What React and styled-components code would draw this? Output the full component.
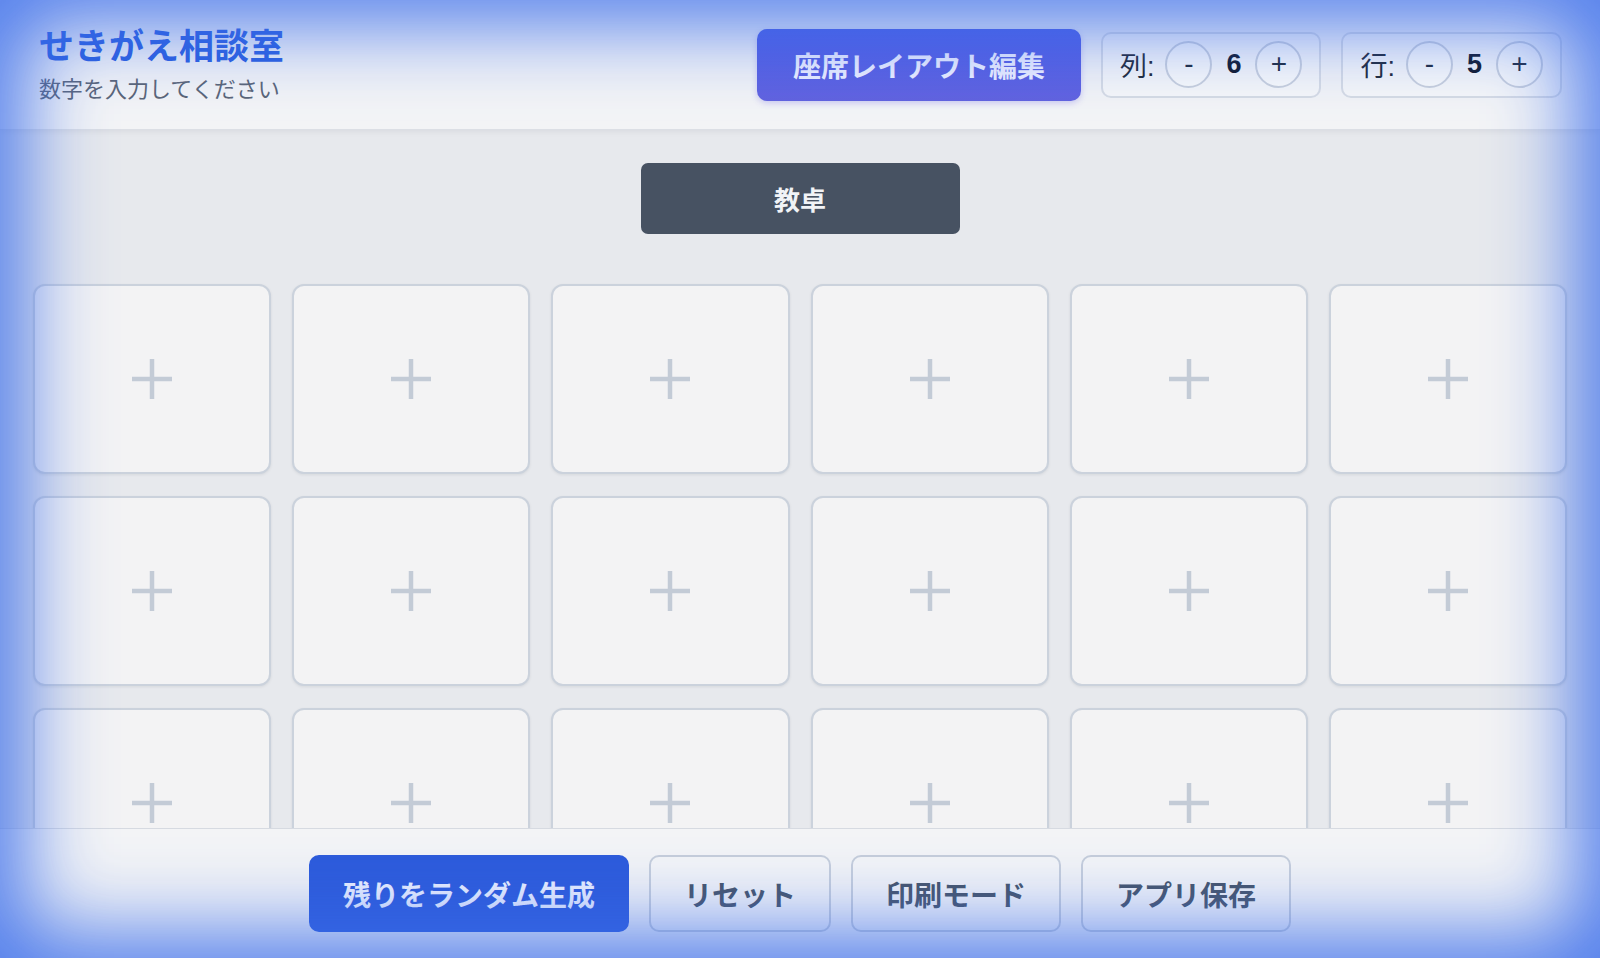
import React, { useState } from "react";
import styled, { createGlobalStyle } from "styled-components";

const Global = createGlobalStyle`
  * { box-sizing: border-box; }
  html, body { margin: 0; padding: 0; height: 100%; }
  body {
    font-family: "Liberation Sans", "Noto Sans CJK JP", sans-serif;
    background: #e7e9ed;
    overflow: hidden;
  }
  #root { height: 100%; }
`;

const Shell = styled.div`
  height: 100vh;
  display: flex;
  flex-direction: column;
  background: #e7e9ed;
`;

const Header = styled.header`
  height: 130px;
  flex-shrink: 0;
  display: flex;
  align-items: center;
  justify-content: space-between;
  padding: 0 38px 0 39px;
  background: #f3f4f6;
  border-bottom: 1px solid #dcdfe5;
  box-shadow: 0 2px 6px rgba(15, 23, 42, 0.06);
  position: relative;
  z-index: 1;
`;

const TitleBlock = styled.div`
  display: flex;
  flex-direction: column;
  gap: 8px;
`;

const Title = styled.h1`
  margin: 0;
  font-size: 35px;
  line-height: 42px;
  font-weight: 700;
  color: #2b5fdf;
`;

const Subtitle = styled.p`
  margin: 0;
  font-size: 22px;
  line-height: 28px;
  color: #5b6576;
`;

const HeaderRight = styled.div`
  display: flex;
  align-items: center;
  gap: 20px;
`;

const EditButton = styled.button`
  height: 72px;
  padding: 0 36px;
  border: none;
  border-radius: 10px;
  background: linear-gradient(180deg, #4c5de5 0%, #6263df 100%);
  color: #eef0ff;
  font-family: inherit;
  font-size: 28px;
  font-weight: 700;
  cursor: pointer;
  box-shadow: 0 2px 6px rgba(79, 70, 229, 0.25);
`;

const Stepper = styled.div`
  height: 66px;
  display: flex;
  align-items: center;
  padding: 0 17px;
  border: 2px solid #d6dbe4;
  border-radius: 10px;
  background: rgba(255, 255, 255, 0.25);
`;

const StepLabel = styled.span`
  font-size: 27px;
  color: #1f2937;
  margin-right: 11px;
`;

const Circle = styled.button`
  width: 47px;
  height: 47px;
  border-radius: 50%;
  border: 2px solid #c9d0dc;
  background: rgba(255, 255, 255, 0.35);
  color: #1e293b;
  font-family: "Liberation Sans", sans-serif;
  font-size: 28px;
  font-weight: 500;
  line-height: 1;
  display: flex;
  align-items: center;
  justify-content: center;
  padding: 0 0 2px;
  cursor: pointer;
`;

const StepValue = styled.span`
  min-width: 43px;
  text-align: center;
  font-size: 27px;
  font-weight: 700;
  color: #0f172a;
`;

const Main = styled.main`
  flex: 1;
  overflow-y: auto;
  scrollbar-width: none;
  &::-webkit-scrollbar { display: none; }
  padding: 33px 33px 40px 33px;
`;

const Desk = styled.div`
  width: 319px;
  height: 71px;
  margin: 0 auto 50px;
  border-radius: 7px;
  background: #475262;
  color: #f1f3f6;
  font-size: 26px;
  font-weight: 700;
  display: flex;
  align-items: center;
  justify-content: center;
`;

const Grid = styled.div`
  display: grid;
  grid-template-columns: repeat(${(p) => p.$cols}, 1fr);
  gap: 22px 21px;
`;

const Seat = styled.button`
  height: 190px;
  border: 2px solid #cbd2dc;
  border-radius: 12px;
  background: #f3f3f4;
  box-shadow: 0 1px 3px rgba(15, 23, 42, 0.08);
  display: flex;
  align-items: center;
  justify-content: center;
  padding: 0;
  cursor: pointer;
`;

const Footer = styled.footer`
  height: 130px;
  flex-shrink: 0;
  display: flex;
  align-items: center;
  justify-content: center;
  gap: 20px;
  background: #f3f4f6;
  border-top: 1px solid #d6dae1;
  position: relative;
  z-index: 1;
`;

const ActionButton = styled.button`
  height: 77px;
  padding: 0 ${(p) => (p.$primary ? "32px" : "33px")};
  border-radius: 10px;
  font-family: inherit;
  font-size: 28px;
  font-weight: 700;
  cursor: pointer;
  border: 2px solid ${(p) => (p.$primary ? "#2d5bdb" : "#c6cedb")};
  background: ${(p) => (p.$primary ? "#2d5bdb" : "rgba(255,255,255,0.15)")};
  color: ${(p) => (p.$primary ? "#eef2ff" : "#475569")};
`;

const Glow = styled.div`
  position: fixed;
  inset: 0;
  pointer-events: none;
  z-index: 10;
  box-shadow: inset 0 0 80px 26px rgba(60, 110, 235, 0.88);
`;

const PlusIcon = () => (
  <svg width="42" height="42" viewBox="0 0 42 42">
    <path d="M21 1 V41 M1 21 H41" stroke="#c3cbd6" strokeWidth="4.5" fill="none" />
  </svg>
);

export default function App() {
  const [cols, setCols] = useState(6);
  const [rows, setRows] = useState(5);
  const seats = Array.from({ length: cols * rows }, (_, i) => i);

  return (
    <>
      <Global />
      <Shell>
        <Header>
          <TitleBlock>
            <Title>せきがえ相談室</Title>
            <Subtitle>数字を入力してください</Subtitle>
          </TitleBlock>
          <HeaderRight>
            <EditButton>座席レイアウト編集</EditButton>
            <Stepper>
              <StepLabel>列:</StepLabel>
              <Circle onClick={() => setCols((c) => Math.max(1, c - 1))}>-</Circle>
              <StepValue>{cols}</StepValue>
              <Circle onClick={() => setCols((c) => c + 1)}>+</Circle>
            </Stepper>
            <Stepper>
              <StepLabel>行:</StepLabel>
              <Circle onClick={() => setRows((r) => Math.max(1, r - 1))}>-</Circle>
              <StepValue>{rows}</StepValue>
              <Circle onClick={() => setRows((r) => r + 1)}>+</Circle>
            </Stepper>
          </HeaderRight>
        </Header>
        <Main>
          <Desk>教卓</Desk>
          <Grid $cols={cols}>
            {seats.map((i) => (
              <Seat key={i} aria-label="席を追加">
                <PlusIcon />
              </Seat>
            ))}
          </Grid>
        </Main>
        <Footer>
          <ActionButton $primary>残りをランダム生成</ActionButton>
          <ActionButton>リセット</ActionButton>
          <ActionButton>印刷モード</ActionButton>
          <ActionButton>アプリ保存</ActionButton>
        </Footer>
      </Shell>
      <Glow />
    </>
  );
}
